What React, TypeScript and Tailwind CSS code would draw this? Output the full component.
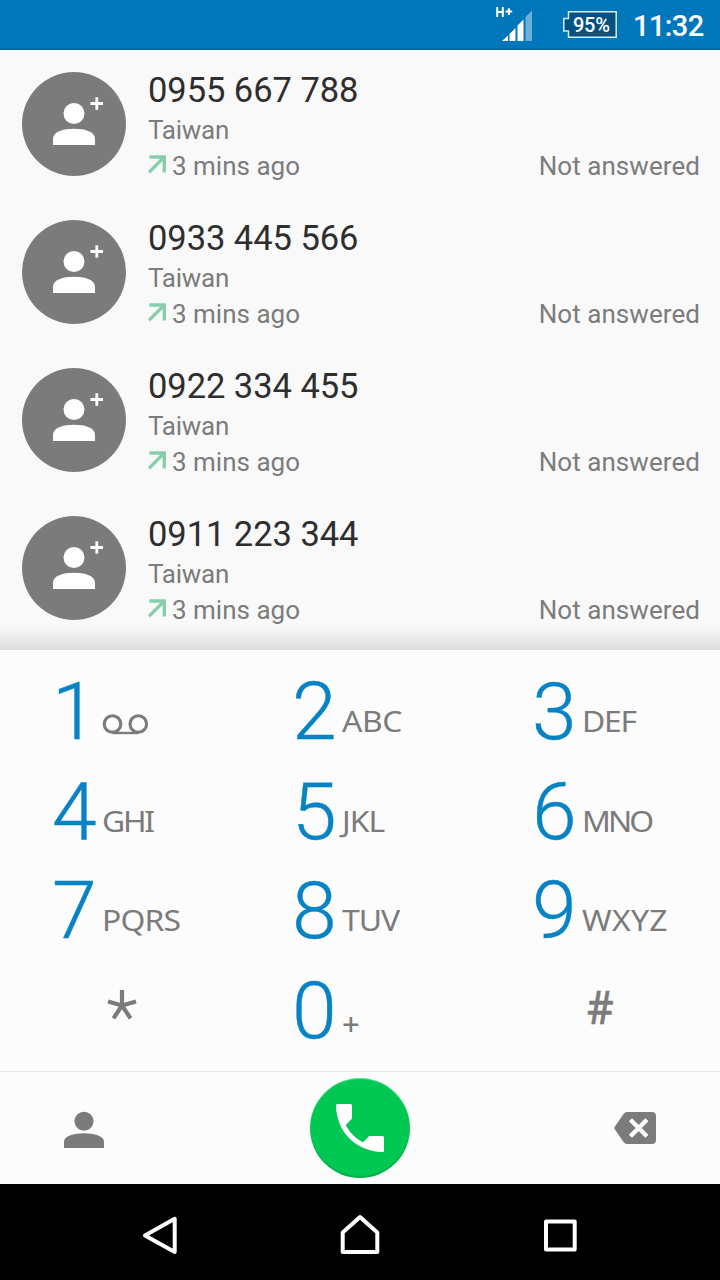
const calls = ["0955 667 788", "0933 445 566", "0922 334 455", "0911 223 344"];

const keys = [
  { digit: "1", letters: "", tracking: "" },
  { digit: "2", letters: "ABC", tracking: "tracking-[-0.4px]" },
  { digit: "3", letters: "DEF", tracking: "tracking-[-1.1px]" },
  { digit: "4", letters: "GHI", tracking: "tracking-[-2.1px]" },
  { digit: "5", letters: "JKL", tracking: "tracking-[-0.9px]" },
  { digit: "6", letters: "MNO", tracking: "tracking-[-2.7px]" },
  { digit: "7", letters: "PQRS", tracking: "tracking-[-0.8px]" },
  { digit: "8", letters: "TUV", tracking: "tracking-[-0.9px]" },
  { digit: "9", letters: "WXYZ", tracking: "tracking-[0.3px]" },
  { digit: "*", letters: "", tracking: "" },
  { digit: "0", letters: "+", tracking: "" },
  { digit: "#", letters: "", tracking: "" },
];

function StatusBar() {
  return (
    <header className="flex h-[50px] shrink-0 items-start border-b-2 border-[#0069a6] bg-[#0077bb] pl-[495px] text-white">
      <svg width="38" height="48" viewBox="0 0 38 48" className="shrink-0">
        <path d="M2.200 7v10M7.800 7v10M2 12h5.800M10.600 11.600h6.600M13.900 8.300v6.600" fill="none" stroke="#fff" strokeWidth="2" />
        <path d="M7 41l6-5.6V41zM14.500 34l6-6V41h-6zM22.500 25.500l6-6V41h-6z" fill="#fff" />
        <path d="M30.500 17l6.500-6.500V41h-6.500z" fill="#6eafd8" />
      </svg>
      <div className="relative mt-[11px] ml-[30px] h-[27px] w-[54px] shrink-0">
        <svg width="54" height="27" viewBox="0 0 54 27" className="absolute inset-0">
          <path d="M5.500 .8H53.200V26.200H5.500V20H.8V7.500H5.500z" fill="#075083" stroke="#d5efef" strokeWidth="1.500" />
        </svg>
        <span className="relative block pl-[10px] text-[20px] leading-[28px] font-medium tracking-[-0.3px]">95%</span>
      </div>
      <span className="ml-[16px] text-[29px] leading-[52px] font-medium tracking-[-0.6px]">11:32</span>
    </header>
  );
}

function CallRow({ number }: { number: string }) {
  return (
    <li className="flex h-[148px] items-start pt-[22px] pr-5 pl-[22px]">
      <svg width="104" height="104" viewBox="0 0 104 104" className="shrink-0">
        <circle cx="52" cy="52" r="52" fill="#7b7b7b" />
        <circle cx="52" cy="41.500" r="10.500" fill="#fff" />
        <path d="M31 73V66.500C31 60 41 56.800 52 56.800S73 60 73 66.500V73z" fill="#fff" />
        <path d="M68.500 31.500h12.500M74.800 25.200v12.600" stroke="#fff" strokeWidth="2.800" />
      </svg>
      <div className="ml-[22px] flex-1 text-[26px] leading-[36px] text-[#7c7c7c]">
        <div className="h-[40px] text-[34.5px] leading-[36px] tracking-[-0.05px] text-[#2e2e2e]">{number}</div>
        <div className="h-[36px] tracking-[-0.25px]">Taiwan</div>
        <div className="flex h-[36px] items-start">
          <svg width="20" height="20" viewBox="0 0 20 20" className="mt-[7px] shrink-0" fill="none" stroke="#86cfac" strokeWidth="3.400">
            <path d="M1.500 2H16.300V17.500M15.800 2.500L1 17.300" />
          </svg>
          <span className="ml-[4px]">3 mins ago</span>
          <span className="ml-auto tracking-[0.06px]">Not answered</span>
        </div>
      </div>
    </li>
  );
}

function Key({ digit, letters, tracking }: { digit: string; letters: string; tracking: string }) {
  if (digit === "*")
    return (
      <div className="flex pl-[107px]">
        <svg width="30" height="32" viewBox="0 0 30 32" className="mt-[30px]" fill="none" stroke="#7b7b7b" strokeWidth="4.200">
          <path d="M15 0V15.500M15 15.500L1 11.500M15 15.500L29 11.500M15 15.500L6.500 28.300M15 15.500L23.500 28.300" />
        </svg>
      </div>
    );
  if (digit === "#")
    return (
      <div className="pl-[107px]">
        <span className="block origin-left scale-x-90 font-['Noto_Sans',sans-serif] text-[46px] leading-[93px] font-medium text-[#7b7b7b] [-webkit-text-stroke:0.5px_#7b7b7b]">
          #
        </span>
      </div>
    );
  return (
    <div className="flex items-start pl-[52px]">
      <span className="w-[45px] text-[80.5px] leading-[101px] font-light text-[#0783c4] [-webkit-text-stroke:0.4px_#0783c4]">{digit}</span>
      {digit === "1" ? (
        <svg width="48" height="22" viewBox="0 0 48 22" className="mt-[52px] ml-[5px]" fill="none" stroke="#7b7b7b">
          <circle cx="10.500" cy="11" r="8.300" strokeWidth="3.100" />
          <circle cx="36.300" cy="11" r="8.300" strokeWidth="3.100" />
          <path d="M10.500 20h25.800" strokeWidth="2.400" />
        </svg>
      ) : letters === "+" ? (
        <span className="ml-[5px] pt-[13px] font-['Noto_Sans',sans-serif] text-[31px] leading-[100px] font-medium text-[#7b7b7b]">+</span>
      ) : (
        <span
          className={`ml-[5px] origin-left scale-x-108 pt-[10px] font-['Noto_Sans',sans-serif] text-[29.5px] leading-[100px] text-[#7b7b7b] ${tracking}`}
        >
          {letters}
        </span>
      )}
    </div>
  );
}

export default function App() {
  return (
    <div className="flex h-[1280px] w-[720px] flex-col overflow-hidden bg-[#fcfcfc] font-[Roboto,sans-serif]">
      <StatusBar />
      <main className="relative h-[600px] shrink-0 overflow-hidden bg-[#f9f9f9]">
        <ul>
          {calls.map((number) => (
            <CallRow key={number} number={number} />
          ))}
        </ul>
        <div className="absolute inset-x-0 bottom-0 h-[23px] bg-linear-to-b from-transparent to-black/12" />
      </main>
      <section className="grid h-[421px] shrink-0 auto-rows-[99.6px] grid-cols-3 bg-[#fcfcfc] pt-[11px]">
        {keys.map((key) => (
          <Key key={key.digit} {...key} />
        ))}
      </section>
      <section className="flex h-[113px] shrink-0 items-center justify-between border-t border-[#e6e6e6] px-[64px] pb-px">
        <svg width="42" height="38" viewBox="0 0 42 38" className="mt-[4px]" fill="#7b7b7b">
          <circle cx="20" cy="10.300" r="9.500" />
          <path d="M0 37V30.500C0 25 10 22.200 20 22.200S40 25 40 30.500V37z" />
        </svg>
        <button className="flex size-[100px] items-center justify-center rounded-full bg-[#00c853] shadow-[inset_0_1px_1px_rgba(255,255,255,0.35),inset_0_-2px_1px_rgba(0,0,0,0.12)]">
          <svg width="48" height="48" viewBox="0 0 48 48" fill="#fff">
            <path d="M1.500 0H14.500Q16 0 16 1.500V14.500L9.800 21C13.500 28.500 19.500 34.500 27 38.200L33.300 32H46.500Q48 32 48 33.500V46.500Q48 48 46.500 48C20 47.500 .5 28 0 1.500Q0 0 1.500 0z" />
          </svg>
        </button>
        <svg width="42" height="32" viewBox="0 0 42 32">
          <path d="M13 0H38a4 4 0 0 1 4 4V28a4 4 0 0 1-4 4H13a4 4 0 0 1-3.300-1.800L.6 17a1.800 1.800 0 0 1 0-2L9.700 1.800A4 4 0 0 1 13 0z" fill="#7b7b7b" />
          <path d="M16.500 7.800l16.400 16.400M32.900 7.800L16.500 24.200" stroke="#fff" strokeWidth="4.400" />
        </svg>
      </section>
      <nav className="flex h-[96px] shrink-0 items-center justify-between bg-black px-[140px] pt-[3px]">
        <svg width="40" height="44" viewBox="0 0 40 44" fill="none" stroke="#fff" strokeWidth="4" strokeLinejoin="round">
          <path d="M34.700 6.800V40L5 23.500z" />
        </svg>
        <svg width="44" height="44" viewBox="0 0 44 44" fill="none" stroke="#fff" strokeWidth="4" strokeLinejoin="round">
          <path d="M4.700 40V20.500L22 5 39.300 20.500V40z" />
        </svg>
        <svg width="40" height="44" viewBox="0 0 40 44" fill="none" stroke="#fff" strokeWidth="4" strokeLinejoin="round">
          <path d="M6 9.500H34.700V37.500H6z" />
        </svg>
      </nav>
    </div>
  );
}
